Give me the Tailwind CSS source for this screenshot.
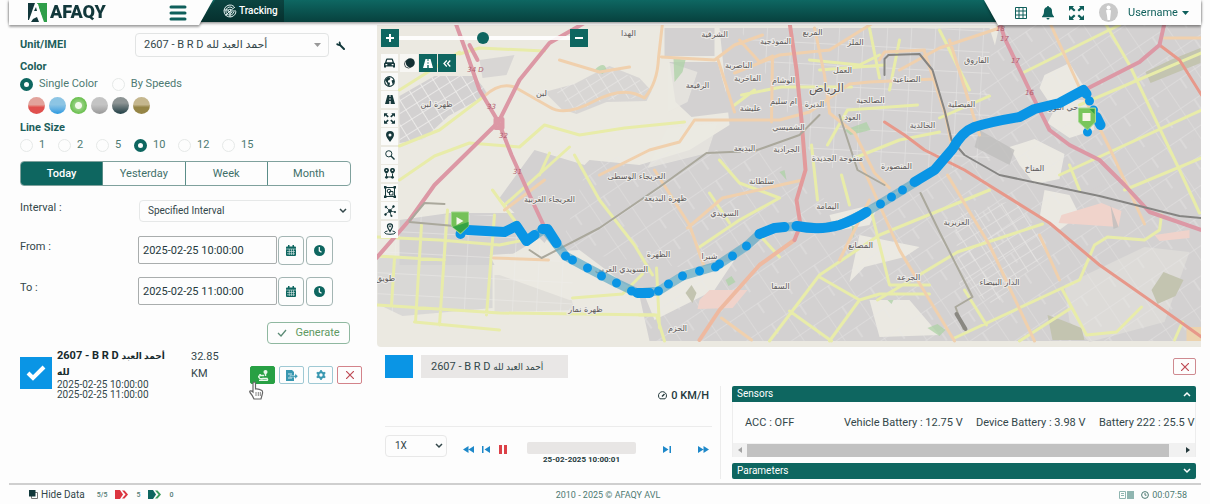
<!DOCTYPE html>
<html lang="en">
<head>
  <meta charset="UTF-8" />
  <meta name="viewport" content="width=device-width, initial-scale=1.0" />
  <title>AFAQY AVL - Tracking</title>
  <script src="https://cdn.jsdelivr.net/npm/@tailwindcss/browser@4"></script>
</head>
<body class="bg-[#fdfdfd] font-['Roboto','DejaVu_Sans',sans-serif] text-[11px] leading-4 text-[#33474a]">
<div class="min-h-screen flex flex-col px-[9px]">

  <!-- Header -->
  <header class="relative z-20 h-[22px] flex items-start bg-linear-to-b from-[#0e6762] to-[#07413e] shadow-[0_1px_3px_rgba(0,0,0,0.5)]">
    <div class="drop-shadow-[0_2px_1px_rgba(0,0,0,0.35)]">
      <div class="h-[25px] w-[204px] pl-[19px] pr-[26px] flex items-center justify-between bg-[#fdfdfd] [clip-path:polygon(0_0,100%_0,calc(100%-14px)_100%,0_100%)]">
        <a href="#" class="flex items-start h-6 gap-[2px] text-[#12383b] text-lg leading-[22px] font-black">
          <svg class="w-5 h-[21px]" viewBox="0 0 20 21"><path d="M0 2h7L1 19H0z" fill="#12383b"/><path d="M9 2h10v19h-3z" fill="#2f9e49"/><path d="M7 3l3 0 5 18h-3l-2-6-4 1-4 4H1L3 15l4-3z" fill="#fff"/><path d="M5 18l4-2 2 5H3z M6 10l2-4 1 4z" fill="#12383b"/></svg>
          AFAQY
        </a>
        <button aria-label="Menu"><svg class="w-[18px] h-4" viewBox="0 0 18 16" stroke="#0f5f5b" stroke-width="3" stroke-linecap="round"><path d="M2 2h14M2 8h14M2 14h14"/></svg></button>
      </div>
    </div>
    <a href="#" class="-ml-3 h-[22px] w-[83px] pl-[22px] flex items-center gap-[2px] text-white text-[10px] font-medium bg-linear-to-b from-[#0b4441] to-[#06302e] [clip-path:polygon(14px_0,100%_0,100%_100%,0_100%)]">
      <svg class="w-[14px] h-[14px] shrink-0" viewBox="0 0 14 14" fill="none" stroke="#e3f0ef"><path d="M13 7.500A6 6 0 1 1 11 2.500M10.800 8A4 4 0 1 1 9.500 4M9 8A2 2 0 1 1 8 5.500M7 7l5-4M7 7h6M2.500 11.500L7 7M7 7v6M1 6h5" stroke-width="1"/></svg>
      Tracking
    </a>
    <div class="ml-auto drop-shadow-[0_2px_1px_rgba(0,0,0,0.35)]">
      <div class="h-[25px] w-[217px] pl-[31px] pr-3 flex items-center justify-between text-[#0f5f5b] bg-[#fdfdfd] [clip-path:polygon(0_0,100%_0,100%_100%,14px_100%)]">
        <button aria-label="Tables"><svg class="w-3 h-3" viewBox="0 0 12 12" fill="none" stroke="currentColor"><path d="M.5.500h11v11H.5zM.5 4h11M.5 8h11M4 .5v11M8 .5v11"/></svg></button>
        <button aria-label="Alerts"><svg class="w-3 h-[14px]" viewBox="0 0 12 14" fill="currentColor"><path d="M6 0c.7 0 1 .5 1 1 2 .5 3 2 3 4 0 3 .7 4 2 5.500v.8H0v-.8C1.300 9 2 8 2 5c0-2 1-3.500 3-4 0-.5.3-1 1-1zM4.500 12h3a1.500 1.500 0 0 1-3 0z"/></svg></button>
        <button aria-label="Full screen"><svg class="w-[15px] h-[14px]" viewBox="0 0 15 14" fill="currentColor"><path d="M0 0h5L3.700 1.500 6.500 4 5 5.500 2 3 0 5zM15 0h-5l1.300 1.500L8.500 4 10 5.500 13 3l2 2zM0 14h5l-1.300-1.500L6.500 10 5 8.500 2 11 0 9zM15 14h-5l1.300-1.500L8.500 10 10 8.500 13 11l2-2z"/></svg></button>
        <button class="flex items-center gap-[10px] text-[11px]">
          <svg class="w-[19px] h-[19px]" viewBox="0 0 19 19"><circle cx="9.500" cy="9.500" r="9.500" fill="#c9c9c9"/><circle cx="9.500" cy="4.500" r="2" fill="#fff"/><path d="M7 7.500q2.500-2 5 0l-.5 5-.5 4.500H8.500L8 12.500z" fill="#fff"/></svg>
          <span class="flex items-center gap-1">Username <svg class="w-[7px] h-1" viewBox="0 0 7 4" fill="currentColor"><path d="M0 0h7L3.500 4z"/></svg></span>
        </button>
      </div>
    </div>
  </header>

  <main class="flex-1 flex pt-[3px]">

    <!-- Track form -->
    <aside class="w-[368px] shrink-0 pl-[11px] pt-2">
      <div class="flex items-center h-6">
        <label for="unit" class="w-[115px] font-bold text-[#1c5f5b]">Unit/IMEI</label>
        <div class="relative w-[194px]">
          <select id="unit" class="appearance-none w-full h-6 pl-2 border border-[#e2e4e4] rounded-sm bg-transparent">
            <option>2607 - B R D أحمد العبد لله</option>
          </select>
          <svg class="absolute right-2 top-[10px] w-[7px] h-1" viewBox="0 0 7 4" fill="#999"><path d="M0 0h7L3.500 4z"/></svg>
        </div>
        <button aria-label="Settings" class="ml-[7px]"><svg class="w-[9px] h-[9px]" viewBox="0 0 9 9" fill="none" stroke="#12383b"><path d="M3.500 3.500L8 8" stroke-width="2" stroke-linecap="round"/><path d="M1 2.500a1.600 1.600 0 0 0 2.500 1A1.600 1.600 0 0 0 3 1" stroke-width="1.800"/></svg></button>
      </div>

      <h2 class="mt-[2px] h-4 font-bold text-[#1c5f5b]">Color</h2>
      <div class="flex items-center h-[18px] text-[#4d7a72]">
        <input type="radio" name="mode" id="single" checked class="appearance-none w-[13px] h-[13px] rounded-full border border-[#e6e9e8] checked:border-4 checked:border-[#0e6660]">
        <label for="single" class="ml-[6px]">Single Color</label>
        <input type="radio" name="mode" id="speeds" class="appearance-none ml-[14px] w-[13px] h-[13px] rounded-full border border-[#e6e9e8] checked:border-4 checked:border-[#0e6660]">
        <label for="speeds" class="ml-[6px]">By Speeds</label>
      </div>
      <div class="flex gap-1 pl-2 pt-1 h-[27px]">
        <input type="radio" name="color" aria-label="Red" class="appearance-none w-[17px] h-[17px] rounded-full bg-linear-to-b from-[#e2a39c] from-45% to-[#e0504e] to-60%">
        <input type="radio" name="color" aria-label="Blue" class="appearance-none w-[17px] h-[17px] rounded-full bg-linear-to-b from-[#8dc5e4] from-45% to-[#2499e0]">
        <input type="radio" name="color" aria-label="Green" checked class="appearance-none w-[17px] h-[17px] rounded-full bg-[radial-gradient(circle,#f2fae9_3px,#93cf7e_4px,#62bd45_9px)]">
        <input type="radio" name="color" aria-label="Gray" class="appearance-none w-[17px] h-[17px] rounded-full bg-linear-to-b from-[#c4c4c4] from-45% to-[#989898]">
        <input type="radio" name="color" aria-label="Black" class="appearance-none w-[17px] h-[17px] rounded-full bg-linear-to-b from-[#8d9494] from-35% to-[#203f45]">
        <input type="radio" name="color" aria-label="Olive" class="appearance-none w-[17px] h-[17px] rounded-full bg-linear-to-b from-[#c5b78e] from-45% to-[#958546] to-60%">
      </div>

      <h2 class="h-4 font-bold text-[#1c5f5b]">Line Size</h2>
      <div class="flex items-center h-[18px] text-[#4d7a72] [&_input]:appearance-none [&_input]:w-[13px] [&_input]:h-[13px] [&_input]:rounded-full [&_input]:border [&_input]:border-[#e6e9e8] [&_input:checked]:border-4 [&_input:checked]:border-[#0e6660]">
        <input type="radio" name="size" id="s1"><label for="s1" class="ml-[6px] w-[19px]">1</label>
        <input type="radio" name="size" id="s2"><label for="s2" class="ml-[6px] w-[19px]">2</label>
        <input type="radio" name="size" id="s5"><label for="s5" class="ml-[6px] w-[19px]">5</label>
        <input type="radio" name="size" id="s10" checked><label for="s10" class="ml-[6px] w-[25px]">10</label>
        <input type="radio" name="size" id="s12"><label for="s12" class="ml-[6px] w-[25px]">12</label>
        <input type="radio" name="size" id="s15"><label for="s15" class="ml-[6px]">15</label>
      </div>

      <div class="mt-[7px] w-[331px] h-[25px] grid grid-cols-4 border border-[#7fa19d] rounded-sm overflow-hidden text-[#3f7069] divide-x divide-[#5a8d88]">
        <button class="bg-[#0e6660] text-white font-medium">Today</button>
        <button>Yesterday</button>
        <button>Week</button>
        <button>Month</button>
      </div>

      <div class="mt-[14px] w-[331px] flex">
        <label for="interval" class="w-[119px]">Interval :</label>
        <div class="relative flex-1">
          <select id="interval" class="appearance-none w-full h-[22px] pl-2 border border-[#e6e8e8] rounded-sm text-[10px]">
            <option>Specified Interval</option>
          </select>
          <svg class="absolute right-1 top-2 w-2 h-[6px]" viewBox="0 0 8 6" fill="none" stroke="#33474a" stroke-width="1.500"><path d="M1 1l3 3 3-3"/></svg>
        </div>
      </div>

      <div class="mt-[14px] flex gap-px">
        <label for="from" class="w-[117px] pt-[3px]">From :</label>
        <input id="from" type="text" value="2025-02-25 10:00:00" class="w-[139px] h-7 pl-1 border border-[#a9adad] rounded-xs text-[#24393c]">
        <button aria-label="Pick start date" class="w-[26px] h-[29px] flex items-center justify-center border border-[#a3b5b3] rounded-sm"><svg class="w-[10px] h-[11px]" viewBox="0 0 10 11"><path d="M1 1.500h8a1 1 0 0 1 1 1V10a1 1 0 0 1-1 1H1a1 1 0 0 1-1-1V2.500a1 1 0 0 1 1-1zM2 0h1.500v2H2zM6.500 0H8v2H6.500z" fill="#0e6660"/><path d="M0 4h10M1 6.500h8M1 8.800h8M3.300 4v6M5.500 4v6M7.500 4v6" stroke="#dcebe9" stroke-width=".6"/></svg></button>
        <button aria-label="Pick start time" class="ml-px w-[27px] h-[29px] flex items-center justify-center border border-[#a3b5b3] rounded-sm"><svg class="w-[11px] h-[11px]" viewBox="0 0 11 11"><circle cx="5.500" cy="5.500" r="5.500" fill="#0e6660"/><path d="M5.300 2v3.800l2.200 1.400" fill="none" stroke="#fff" stroke-width="1.200"/></svg></button>
      </div>

      <div class="mt-3 flex gap-px">
        <label for="to" class="w-[117px] pt-[3px]">To :</label>
        <input id="to" type="text" value="2025-02-25 11:00:00" class="w-[139px] h-7 pl-1 border border-[#a9adad] rounded-xs text-[#24393c]">
        <button aria-label="Pick end date" class="w-[26px] h-[29px] flex items-center justify-center border border-[#a3b5b3] rounded-sm"><svg class="w-[10px] h-[11px]" viewBox="0 0 10 11"><path d="M1 1.500h8a1 1 0 0 1 1 1V10a1 1 0 0 1-1 1H1a1 1 0 0 1-1-1V2.500a1 1 0 0 1 1-1zM2 0h1.500v2H2zM6.500 0H8v2H6.500z" fill="#0e6660"/><path d="M0 4h10M1 6.500h8M1 8.800h8M3.300 4v6M5.500 4v6M7.500 4v6" stroke="#dcebe9" stroke-width=".6"/></svg></button>
        <button aria-label="Pick end time" class="ml-px w-[27px] h-[29px] flex items-center justify-center border border-[#a3b5b3] rounded-sm"><svg class="w-[11px] h-[11px]" viewBox="0 0 11 11"><circle cx="5.500" cy="5.500" r="5.500" fill="#0e6660"/><path d="M5.300 2v3.800l2.200 1.400" fill="none" stroke="#fff" stroke-width="1.200"/></svg></button>
      </div>

      <div class="mt-4 w-[330px] flex justify-end">
        <button class="w-[83px] h-[22px] flex items-center justify-center gap-2 border border-[#8fb8a0] rounded-sm text-[#5f9a63]"><svg class="w-[10px] h-2" viewBox="0 0 10 8" fill="none" stroke="#5b8a75" stroke-width="1.300"><path d="M1 4l3 3 5-6"/></svg> Generate</button>
      </div>

      <!-- Generated track -->
      <div class="mt-1 flex">
        <input type="checkbox" checked aria-label="Show track" class="appearance-none mt-[9px] w-8 h-8 shrink-0 bg-[#0a95e5]">
        <svg class="relative pointer-events-none -ml-[26px] mt-[17px] w-5 h-4 shrink-0" viewBox="0 0 20 16" fill="none" stroke="#fff" stroke-width="4"><path d="M2 8l5 5L18 2"/></svg>
        <div class="ml-[11px] w-[134px]">
          <div class="w-[115px] font-bold leading-4 text-[#16292c]">2607 - B R D <span class="text-[9px]">أحمد العبد لله</span></div>
          <div class="text-[10px] leading-[10px]">2025-02-25 10:00:00<br>2025-02-25 11:00:00</div>
        </div>
        <div class="w-[59px] leading-[17px]">32.85<br>KM</div>
        <div class="flex gap-1 pt-[18px] [&>button]:w-[25px] [&>button]:h-[18px] [&>button]:flex [&>button]:items-center [&>button]:justify-center [&>button]:border [&>button]:rounded-xs">
          <button aria-label="Play route" class="relative bg-[#28a044] border-[#28a044]">
            <svg class="w-3 h-3" viewBox="0 0 12 12" fill="none" stroke="#e8f7ea" stroke-width="1.500"><circle cx="8.500" cy="3" r="1.300" fill="#e8f7ea"/><path d="M8.500 4v3M7 6.500H4q-3 0-2 2t4 1h4q1.500 2-1 2H2M3 5v2"/></svg>
            <svg class="absolute -left-[3px] top-[14px] w-4 h-5" viewBox="0 0 16 20" fill="#fff" stroke="#666" stroke-width="1.200"><path d="M5 11V2.500q0-1.500 1.200-1.500T7.500 2.500V8q3-.5 6.500 1.500.8 1 .5 3L13 18H6q-1-3-4-6.500-.8-1.500.5-1.700T5 11z"/><path d="M8 11v4M10.300 11v4M12.300 11v4" stroke-width=".8"/></svg>
          </button>
          <button aria-label="Export" class="border-[#9fc9d4]"><svg class="w-3 h-[11px]" viewBox="0 0 12 11"><path d="M0 0h6l2 2v9H0z" fill="#3897b0"/><path d="M2 4h4M2 8h4" stroke="#fff" stroke-width=".8"/><path d="M4 5.500h5V3.500l3 2.700-3 2.800V7.200H4z" fill="#3897b0" stroke="#fff" stroke-width=".4"/></svg></button>
          <button aria-label="Options" class="border-[#9fc9d4]"><svg class="w-[10px] h-[10px]" viewBox="0 0 10 10" fill="none" stroke="#3897b0"><circle cx="5" cy="5" r="2.700" stroke-width="2"/><path d="M5 0v10M.7 2.500l8.600 5M.7 7.500l8.600-5" stroke-width="1.600" stroke-dasharray="2 6 2"/></svg></button>
          <button aria-label="Remove" class="border-[#d3838a]"><svg class="w-2 h-2" viewBox="0 0 8 8" stroke="#bf4b55" stroke-width="1.200"><path d="M0 0l8 8M8 0L0 8"/></svg></button>
        </div>
      </div>
    </aside>

    <div class="flex-1 min-w-0 flex flex-col">

      <!-- Map -->
      <section class="relative flex-1 min-h-[280px] rounded-bl-sm overflow-hidden bg-[#ebe9e1]">
        <svg class="absolute inset-0 w-full h-full font-['DejaVu_Sans',sans-serif]" viewBox="377 25 825 322" preserveAspectRatio="xMidYMid slice">
          <defs>
            <pattern id="streetsA" width="13" height="11" patternUnits="userSpaceOnUse" patternTransform="rotate(-32)"><path d="M0 0H13M0 0V11" stroke="#f1f0ee" stroke-width="1.600" fill="none"/></pattern>
            <pattern id="streetsB" width="34" height="25" patternUnits="userSpaceOnUse" patternTransform="rotate(-34)"><path d="M0 0H34M0 0V25M17 0V12" stroke="#e9e8e7" stroke-width="1.300" fill="none"/></pattern>
            <pattern id="streetsC" width="24" height="21" patternUnits="userSpaceOnUse" patternTransform="rotate(3)"><path d="M0 0H24M0 0V21" stroke="#efeeec" stroke-width="1.300" fill="none"/></pattern>
          </defs>

          <!-- Built-up areas -->
          <g fill="#d3d1d1">
            <path d="M400 96l35-20 40 0 14 18-40 22-25 23-24 4z"/>
            <path d="M480 60l35-5-8 20-24 3zM545 92l30-8 15-8 20-10 30 12 12 13-5 10-40 1-30 12-15-5z" opacity=".8"/>
            <path d="M665 28h50v28h-50zM670 62l48 0 14 50-40 5-16-15zM720 28H990L1000 60 1040 130 960 150 900 190 840 225 800 226 740 250 700 270 640 292 600 270 560 250 545 225 560 190 590 160 640 165 690 150 730 125z"/>
            <path d="M535 150l60 18-50 75-45-45z M450 213h85l10 22-50 30h-95v-45z"/>
            <path d="M378 258h115v50l-90 8-25-12z" opacity=".75"/>
            <path d="M495 275h70l10 35-80 2z" opacity=".45"/>
            <path d="M640 296L760 235 800 230 870 215 960 145 1202 95V341H650z"/>
            <path d="M1000 25h202v110l-120 60-120-40 20-50z"/>
          </g>
          <g fill="#ebe9e2">
            <path d="M1020 165l-10-18 25-8 30 15-5 25-25 5zM1045 75l25-12 15 25-35 15-10-15zM1060 100l30 0 5 30-25 8-22-15zM1045 190l25 5 10 20-20 15-20-12z"/>
            <path d="M860 235l60 12-15 10-40 10-15 15zM870 300h40l30 35-60 2zM830 215l50-12-10 22-35 6z"/>
            <path d="M1065 285l80-38 45 5-25 70-75 20-20-20z" fill="#dddbd8"/>
            <path d="M490 255l90-5 40 30 10 20-60 0-70-25zM655 320l60-30 20-30-50 10-40 25z"/>
            <path d="M668 62l30 10-10 30-20 10z M648 168l20-40 50-5-10 30z" opacity=".7"/>
          </g>
          <path d="M400 96l35-20 40 0 14 18-40 22-25 23-24 4z" fill="url(#streetsA)"/>
          <path d="M555 90l35-12 20-10 30 12 10 10-5 8-40 2-30 12zM955 215l60-15 35 50-55 55-35-20z" fill="url(#streetsA)" opacity=".6"/>
          <path d="M640 296L760 235 870 215 960 145 1202 95V341H650zM1000 25h202v110l-120 60-120-40zM560 250l30-90 90-10 80 0 80 60-140 60z" fill="url(#streetsB)" opacity=".55"/>
          <path d="M378 215h115l80 50v48H378zM740 28h250v140H820z" fill="url(#streetsC)" opacity=".6"/>
          <g fill="#f0d3cb"><path d="M700 300l10-10 38 0-15 18-35 1zM1062 215l40-12 20 8-3 16-60-4zM1155 235l35-5v8l-30 3z"/></g>
          <g fill="#aed2a6" opacity=".75"><path d="M674 58l12 2-3 12-8 10zM845 130l22-8 4 8-20 5zM726 280l6-4 4 6-7 4zM928 328l10-4 8 6-6 6zM595 70q10-10 12 0l-4 4zM780 172l5-2 2 10zM852 226h4l-2 12zM888 300h6l-2 4z"/></g>
          <g fill="#c3c4b0"><path d="M1152 290l12-18 20 8-8 16-18 8zM1048 315l14 5 20 8 3 12-32 0zM1146 72l25-12 30-12v15l-50 20zM686 293l6-8 5 8-4 10z"/></g>
          <path d="M1187 327h15v14h-15z" fill="#ecd3ae"/>
          <path d="M980 130l35 20-5 15-35-18zM1111 205l8 22-5 2z" fill="#bfbebd" opacity=".8"/>

          <g fill="none" stroke-linejoin="round" stroke-linecap="round">
            <!-- Secondary roads -->
            <g stroke="#e8eca9" stroke-width="3">
              <path d="M460 54l20-6 65 3M400 90l60-38M400 146l40-16 45-34M400 180l35-24 35-13 50 4 25-22 35 10 45-7 60-6M378 237l62 3 60 5 25-5M378 256l67 4M422 225l-6 97M448 210l-8 115M495 215l-8 100M378 305l122 8 155 2M395 258l-3 47M415 322l85 8M493 190l34 47M505 205l45-40 20-18M540 175l10-22M575 155l25 45 35 45 18 30M573 298l50-4 20-20"/>
              <path d="M700 247l40-27 40-22-40-15-20-23M710 193l20 30M742 95l40-8 70 0M735 105l20-15M810 60l50 5 20-10M828 145l20-35 70-5M820 70l65-5M870 28l10 50M812 145l6 55M842 175l8 30M660 328l-3-60M640 315h17l8 26M760 235l20 22"/>
              <path d="M770 341l50-66 60-40 110-45M820 277l40 23-30 41M860 300l20-6h50M872 212l18 73h40M790 311l42 30M878 300l80-48 85-28M955 338l125-58 15-35 13-8 37 3 15-10 2-15M1063 290l24 45 30-3 25-25M1060 175l142-65M1025 72l95-47M1105 22l25 43 50 105 20 43M1080 105l122-52M1070 165l10 25M1125 190l77-32M1020 341l50-32M940 30l30 60M940 118l50-22M965 290l22 35M1175 340l8-18M900 40l-10 50M850 160l50-20 40-8"/>
            </g>
            <g stroke="#f0d0ad" stroke-width="3">
              <path d="M485 96q15-14 30-9l35 20q15 10 45-6t50-3q13-15 14-40l4-35M600 175l50-25 30-8 15-22h85l30-8 40-28 20-2 65-3M662 57l53 3 20-15 28-10M718 58l17 54M773 56l-1 66M735 73l45-18 50-5 45-28M740 40l20 22 13-6M815 28l10 47 5 37M880 60l5-8 40-2M655 170l35 55 14 40M688 228l35-30 80-18M545 180l-40 30M494 258l55 2M860 160l40 90 30 50 25 41M1050 22l32 70 30 60 33 72M1040 235l20 45M945 110l8 40M948 175l42 70 45 96M950 40l30 95M722 318l30 22M830 113l25 20 20 40 15 15M925 52l20 60M560 60l40 12 30-5M870 200l-30 60M900 70l40-22 60-20M1165 38h37"/>
            </g>
            <!-- Trunk roads -->
            <path d="M795 240l-35 25-40 45-20 30" stroke="#eeb9a0" stroke-width="4"/>
            <path d="M885 122l20 13 20 15 40 20 85 53 50 42 50 35 52 37M1160 45l20 15 22 35" stroke="#e7988a" stroke-width="3"/>
            <path d="M790 22l7 48 5 50 4 50-9 30 4 25-6 15" stroke="#e29a9b" stroke-width="4"/>
            <!-- Motorways -->
            <g stroke="#dc98a5" stroke-width="4">
              <path d="M455 20l11 30 14 40 19 32 13 33 18 40 14 30M590 20l-40 23-30 37-21 42-64 63-25 35-33 38M1000 22l5 16 25 52 20 40 20 15 30 15 25 25 25 27 52 18M1085 90l55-28 20-17 5-22"/>
              <path d="M470 45l8 15M496 119h7v9h-7z" stroke-width="4"/>
            </g>
            <!-- Railways -->
            <path d="M410 221l15-18 20 1M410 222l90 8M530 250l12 8 58-30 60-41 47-34 48-2 45-16 20-20M840 115l18 55 27 15M921 193l19 39 33 65-17 10 8 22" stroke="#aaa89c" stroke-width="2"/>
            <path d="M885 75v-16l4-4 31-1 13 16 12 40 7 30 13 15 35 20 100 21 80 20 22 2" stroke="#858482" stroke-width="2"/>
            <path d="M957 314l9 15" stroke="#8a8882" stroke-width="4"/>
          </g>

          <!-- Place names -->
          <g fill="#5b5858" stroke="#edebe8" stroke-width="2" paint-order="stroke" font-size="8" text-anchor="middle" direction="rtl">
            <text x="629" y="36">الهدا</text><text x="542" y="96">لبن</text><text x="437" y="107">ظهرة لبن</text>
            <text x="715" y="37">الشرفية</text><text x="776" y="44">النموذجية</text><text x="813" y="35">المربع</text>
            <text x="856" y="45">الملز</text><text x="739" y="68">الناصرية</text><text x="843" y="73">العمل</text>
            <text x="748" y="81">الفاخرية</text><text x="698" y="88">الرفيعة</text><text x="784" y="83">الوشام</text>
            <text x="827" y="92" font-size="12">الرياض</text><text x="907" y="82">الصناعية</text><text x="784" y="104">ام سليم</text>
            <text x="815" y="107">الديرة</text><text x="871" y="103">الصالحية</text><text x="751" y="111">عليشة</text>
            <text x="853" y="120">العود</text><text x="789" y="130">الشميسي</text><text x="787" y="152">الجرادية</text>
            <text x="745" y="151">البديعة</text><text x="838" y="161">منفوحة الجديدة</text><text x="923" y="128">الخالدية</text>
            <text x="897" y="169">المنصورة</text><text x="762" y="184">سلطانة</text><text x="977" y="63">الفاروق</text>
            <text x="962" y="107">الفيصلية</text><text x="1064" y="110">حي النور</text><text x="1035" y="171">المناخ</text>
            <text x="637" y="179">العريجاء الوسطى</text><text x="550" y="202">العريجاء الغربية</text><text x="666" y="201">ظهرة البديعة</text>
            <text x="622" y="272">السويدي الغربي</text><text x="386" y="281">طويق</text><text x="586" y="312">ظهرة نمار</text>
            <text x="725" y="216">السويدي</text><text x="659" y="257">الظهرة</text><text x="710" y="259">شبرا</text>
            <text x="781" y="289">السفا</text><text x="678" y="331">الحزم</text><text x="828" y="209">اليمامة</text>
            <text x="861" y="248">المصانع</text><text x="909" y="280">الجرعة</text><text x="957" y="225">العزيزية</text>
            <text x="1000" y="285">الدار البيضاء</text>
          </g>
          <g fill="#b0606f" font-size="7" font-style="italic" text-anchor="middle">
            <text x="476" y="72">34 D</text><text x="492" y="109">33</text><text x="504" y="138">32</text><text x="518" y="174">31</text>
            <text x="1001" y="31">18</text><text x="1005" y="41">17</text><text x="1016" y="63">17</text><text x="1030" y="95">16</text>
          </g>

          <!-- Travelled route -->
          <g fill="none" stroke="#0a95e5" stroke-linejoin="round" stroke-linecap="round">
            <path d="M527 241L545 229 556 243 566 256 588 268 617 283 638 293 659 291 683 276 717 266 747 246 760 234 775 228 800 226 820 228 840 225 867 212 892 197 918 181" stroke="#5fa9c6" stroke-opacity=".7" stroke-width="9"/>
            <path d="M461 234v0M468 230L505 232 517 226 527 241 535 235M543 229L548 229 557 243M638 293h12M760 234L775 228 785 227M797 226Q820 231 840 225 855 220 867 212M915 182L935 170 953 149Q962 132 975 127 990 122 1020 117L1035 109 1060 103 1084 90 1087 94M1101 125L1097 117" stroke-width="10"/>
            <path d="M566 256v0M573 260v0M588 268v0M602 276v0M617 283v0M632 291v0M659 291v0M669 284v0M683 276v0M700 271v0M716 267v0M720 264v0M733 256v0M747 246v0M881 204v0M892 197v0M903 190v0M1090 101v0M1094 110v0M1088 132v0" stroke-width="9"/>
          </g>
          <!-- Start and end markers -->
          <path d="M452 212h17v14l-8 8-9-8z" fill="#74c158" stroke="#9fd58c"/>
          <path d="M453 227l16-5v4l-8 7z" fill="#35a344"/><path d="M457 217v8l7-4z" fill="#f4f8ea"/>
          <path d="M1079 108h17v14l-8 8-9-8z" fill="#79c65b" stroke="#a6d895"/>
          <path d="M1090 109h5v5z" fill="#35a344"/><path d="M1083 113h8v8h-8z" fill="#f6f4e6"/>
        </svg>

        <!-- Zoom -->
        <div class="absolute left-1 top-1 flex items-center">
          <button aria-label="Zoom in" class="w-[18px] h-[18px] bg-[#0e6660] flex items-center justify-center"><svg class="w-2 h-2" viewBox="0 0 8 8" stroke="#fff" stroke-width="2"><path d="M0 4h8M4 0v8"/></svg></button>
          <input type="range" aria-label="Zoom level" value="49" class="appearance-none w-[171px] h-1 bg-white/90 [&::-webkit-slider-thumb]:appearance-none [&::-webkit-slider-thumb]:w-3 [&::-webkit-slider-thumb]:h-3 [&::-webkit-slider-thumb]:rounded-full [&::-webkit-slider-thumb]:bg-[#0e6660]">
          <button aria-label="Zoom out" class="w-[18px] h-[18px] bg-[#0e6660] flex items-center justify-center"><svg class="w-2 h-2" viewBox="0 0 8 8" stroke="#fff" stroke-width="2"><path d="M0 4h8"/></svg></button>
        </div>

        <!-- Map tools -->
        <div class="absolute left-1 top-[29px] h-[184px] flex flex-col justify-between text-[#16383b] [&>button]:w-[17px] [&>button]:h-[17px] [&>button]:flex [&>button]:items-center [&>button]:justify-center [&>button]:bg-[#fafaf9]">
          <button aria-label="Vehicles"><svg class="w-[11px] h-[10px]" viewBox="0 0 11 10" fill="currentColor"><path d="M2 1.500Q2.200.500 3 .5h5q.8 0 1 1l1 3 1 1V9.500H9V8.500H2v1H0V5.500l1-1zM3.200 1.800L2.500 4.200h6L7.800 1.800zM1.500 6v1.200h1.800V6zM7.700 6v1.200h1.800V6z" fill-rule="evenodd"/></svg></button>
          <button aria-label="Base map"><svg class="w-[11px] h-[11px]" viewBox="0 0 11 11"><circle cx="5.500" cy="5.500" r="4.800" fill="#fff" stroke="currentColor" stroke-width="1.200"/><path d="M1 4l3-3 2.500.8L5.500 4 4 4.500v1.700l2 .6-.5 3L4 10 3 7zM7.500 4.500L10 3.500v3L8.500 8z" fill="currentColor"/></svg></button>
          <button aria-label="Traffic"><svg class="w-[10px] h-[9px]" viewBox="0 0 10 9"><path d="M2.500 0H4.500v2h1V0h2L10 9H5.700V6H4.300v3H0zM4.500 3.200v1.500h1V3.200z" fill="currentColor" fill-rule="evenodd"/></svg></button>
          <button aria-label="Fit"><svg class="w-[11px] h-[11px]" viewBox="0 0 15 14" fill="currentColor"><path d="M0 0h5L3.700 1.500 6.500 4 5 5.500 2 3 0 5zM15 0h-5l1.300 1.500L8.500 4 10 5.500 13 3l2 2zM0 14h5l-1.300-1.500L6.500 10 5 8.500 2 11 0 9zM15 14h-5l1.300-1.500L8.500 10 10 8.500 13 11l2-2z"/></svg></button>
          <button aria-label="Places"><svg class="w-2 h-[11px]" viewBox="0 0 8 11"><path d="M4 0a4 4 0 0 1 4 4c0 2.500-3 5-4 7C3 9 0 6.500 0 4a4 4 0 0 1 4-4zm0 2.500A1.500 1.500 0 1 0 4 5.500 1.500 1.500 0 0 0 4 2.500z" fill="currentColor" fill-rule="evenodd"/></svg></button>
          <button aria-label="Search"><svg class="w-[10px] h-[10px]" viewBox="0 0 10 10" fill="none" stroke="currentColor"><circle cx="3.800" cy="3.800" r="3.100"/><path d="M6 6l3.500 3.500" stroke-width="1.400"/></svg></button>
          <button aria-label="Route"><svg class="w-[11px] h-[11px]" viewBox="0 0 11 11"><path d="M2.500 0A2.300 2.300 0 0 1 5 2.300C5 4 2.500 6 2.500 6S0 4 0 2.300A2.300 2.300 0 0 1 2.500 0zM8.500 0A2.300 2.300 0 0 1 11 2.300C11 4 8.500 6 8.500 6S6 4 6 2.300A2.300 2.300 0 0 1 8.500 0z" fill="currentColor"/><circle cx="2.500" cy="2.300" r=".8" fill="#fff"/><circle cx="8.500" cy="2.300" r=".8" fill="#fff"/><path d="M2.500 6v3h6V6" fill="none" stroke="currentColor"/><circle cx="2.500" cy="9.300" r="1.400" fill="currentColor"/><circle cx="8.500" cy="9.300" r="1.400" fill="currentColor"/></svg></button>
          <button aria-label="Geofence"><svg class="w-3 h-3" viewBox="0 0 12 12" fill="none" stroke="currentColor"><path d="M1.500 1.500h9v9h-9z"/><path d="M0 0h2.500v2.500H0zM9.500 0H12v2.500H9.500zM0 9.500h2.500V12H0zM9.500 9.500H12V12H9.500z" fill="currentColor" stroke="none"/><circle cx="5" cy="5" r="1.800"/><path d="M5.500 5.500H9V9H5.500z"/></svg></button>
          <button aria-label="Cluster"><svg class="w-3 h-3" viewBox="0 0 12 12" fill="currentColor" stroke="currentColor" stroke-width=".8"><path d="M6 6L2 2M6 6l3.500-4.500M6 6l5 1M6 6l-4.500 3M6 6l1 5"/><circle cx="6" cy="6" r="1.500"/><circle cx="2" cy="2" r=".9"/><circle cx="9.500" cy="1.500" r=".9"/><circle cx="11" cy="7" r=".7"/><circle cx="1.500" cy="9.500" r=".9"/><circle cx="7.500" cy="11" r=".7"/></svg></button>
          <button aria-label="My position"><svg class="w-3 h-3" viewBox="0 0 12 12" fill="none" stroke="currentColor"><path d="M6 8.500C5 7 3.500 5 3.500 3.300a2.500 2.500 0 0 1 5 0C8.500 5 7 7 6 8.500z" stroke-width="1.300"/><circle cx="6" cy="3.300" r=".6"/><path d="M3.500 8Q.5 8.500.6 9.700 1 11.300 6 11.300t5.400-1.600Q11.500 8.500 8.500 8"/></svg></button>
        </div>
        <div class="absolute left-[23px] top-[29px] flex gap-px [&>button]:h-[18px] [&>button]:w-[18px] [&>button]:flex [&>button]:items-center [&>button]:justify-center">
          <button aria-label="Shade" class="bg-white/60"><svg class="w-[11px] h-[11px]" viewBox="0 0 11 11"><circle cx="4.500" cy="6" r="4" fill="#fff" stroke="#16292c" stroke-width=".8"/><circle cx="6.300" cy="4.800" r="4.500" fill="#122f33"/></svg></button>
          <button aria-label="Roads" class="bg-[#0e6660] text-white"><svg class="w-[10px] h-[9px]" viewBox="0 0 10 9"><path d="M2.500 0H4.500v2h1V0h2L10 9H5.700V6H4.300v3H0zM4.500 3.200v1.500h1V3.200z" fill="currentColor" fill-rule="evenodd"/></svg></button>
          <button aria-label="Collapse" class="bg-[#0e6660]"><svg class="w-2 h-[7px]" viewBox="0 0 8 7" fill="none" stroke="#fff" stroke-width="1.300"><path d="M3.800.500L1 3.500l2.800 3M7.300.500L4.500 3.500l2.800 3"/></svg></button>
        </div>
      </section>

      <!-- Player -->
      <section class="pt-2 pb-1 pl-2 pr-[5px]">
        <div class="flex items-center">
          <span class="w-7 h-[23px] bg-[#0a95e5]"></span>
          <span class="ml-2 w-[147px] h-[23px] pl-[10px] leading-[23px] bg-[#e9e7e6]">2607 - B R D <span class="text-[9px]">أحمد العبد لله</span></span>
          <button aria-label="Close" class="ml-auto w-[23px] h-[17px] flex items-center justify-center border border-[#cf8a90] rounded-xs"><svg class="w-2 h-2" viewBox="0 0 8 8" stroke="#bf4b55" stroke-width="1.200"><path d="M0 0l8 8M8 0L0 8"/></svg></button>
        </div>
        <div class="mt-2 flex">
          <div class="w-[336px] pr-2 border-r border-[#ececec]">
            <div class="h-[41px] pt-[2px] pr-[3px] flex items-start justify-end gap-1 font-medium text-[#24393c] border-b border-[#ececec]">
              <svg class="mt-[3px] w-[9px] h-[9px]" viewBox="0 0 9 9" fill="none" stroke="currentColor"><path d="M2 7.800a4 4 0 1 1 5 0z"/><path d="M4 5.500L6.500 3" stroke-width="1.500"/></svg>
              0 KM/H
            </div>
            <div class="pt-2 flex items-start">
              <div class="relative">
                <select aria-label="Speed" class="appearance-none w-[62px] h-[22px] pl-[9px] border border-[#e8e8e8] rounded-sm text-[10px]"><option>1X</option></select>
                <svg class="absolute right-1 top-2 w-2 h-[6px]" viewBox="0 0 8 6" fill="none" stroke="#33474a" stroke-width="1.500"><path d="M1 1l3 3 3-3"/></svg>
              </div>
              <button aria-label="Rewind" class="ml-4 mt-[11px]"><svg class="w-[11px] h-[7px]" viewBox="0 0 11 7" fill="#1e88c9"><path d="M5.500 0v7L0 3.500zM11 0v7L5.500 3.500z"/></svg></button>
              <button aria-label="Previous" class="ml-2 mt-[11px]"><svg class="w-2 h-[7px]" viewBox="0 0 8 7" fill="#1e88c9"><path d="M0 0h1.500v7H0zM8 0v7L2.500 3.500z"/></svg></button>
              <button aria-label="Pause" class="ml-[9px] mt-[10px]"><svg class="w-2 h-[9px]" viewBox="0 0 8 9" fill="#dc4148"><path d="M0 0h3v9H0zM5 0h3v9H5z"/></svg></button>
              <div class="ml-5 w-[109px] pt-[7px]">
                <div class="h-3 bg-[#e8e6e5] rounded-xs"></div>
                <div class="text-[8px] leading-3 font-bold text-center text-[#24393c]">25-02-2025 10:00:01</div>
              </div>
              <button aria-label="Next" class="ml-[27px] mt-[11px]"><svg class="w-2 h-[7px]" viewBox="0 0 8 7" fill="#1e88c9"><path d="M6.500 0H8v7H6.500zM0 0v7l5.500-3.500z"/></svg></button>
              <button aria-label="Forward" class="ml-auto mr-[3px] mt-[11px]"><svg class="w-[11px] h-[7px]" viewBox="0 0 11 7" fill="#1e88c9"><path d="M0 0v7l5.500-3.500zM5.500 0v7L11 3.500z"/></svg></button>
            </div>
          </div>

          <div class="ml-[11px] flex-1 min-w-0">
            <button class="w-full h-4 px-[5px] flex items-center justify-between bg-[#0e6660] text-white text-[10px] rounded-t-xs">Sensors <svg class="w-2 h-[6px]" viewBox="0 0 8 6" fill="none" stroke="#fff" stroke-width="1.500"><path d="M1 5l3-3 3 3"/></svg></button>
            <div class="border-x border-[#ededed]">
              <div class="h-[41px] pl-3 flex items-center overflow-hidden whitespace-nowrap">
                <span class="w-[99px] shrink-0">ACC : OFF</span>
                <span class="w-[132px] shrink-0">Vehicle Battery : 12.75 V</span>
                <span class="w-[123px] shrink-0">Device Battery : 3.98 V</span>
                <span>Battery 222 : 25.5 V</span>
              </div>
              <div class="h-[14px] px-1 flex items-center bg-[#f1f1f1]">
                <svg class="w-[10px] h-[6px]" viewBox="0 0 10 6" fill="#a3a3a3"><path d="M5 0v6L1 3z"/></svg>
                <div class="flex-1 h-[13px] bg-[#c1c1c1]"></div>
                <svg class="ml-4 w-[6px] h-[6px]" viewBox="0 0 6 6" fill="#24393c"><path d="M1 0v6l4-3z"/></svg>
              </div>
            </div>
            <button class="mt-[6px] w-full h-4 px-[5px] flex items-center justify-between bg-[#0e6660] text-white text-[10px] rounded-xs">Parameters <svg class="w-2 h-[6px]" viewBox="0 0 8 6" fill="none" stroke="#fff" stroke-width="1.500"><path d="M1 1l3 3 3-3"/></svg></button>
          </div>
        </div>
      </section>
    </div>
  </main>

  <!-- Footer -->
  <footer class="h-[21px] pl-5 pr-[14px] grid grid-cols-[1fr_auto_1fr] items-center border-t-2 border-[#cfcfcf] text-[9px] text-[#4d7a72]">
    <div class="flex items-center text-[7px] font-medium">
      <button class="flex items-center gap-[3px] text-[10px] font-normal text-[#33474a]"><svg class="w-[9px] h-[9px]" viewBox="0 0 9 9"><path d="M2.500 2.500h6v6h-6z" fill="#fff" stroke="#777"/><path d="M0 0h6.500v6.500H0z" fill="#12383b"/></svg>Hide Data</button>
      <span class="ml-3">5/5</span>
      <svg class="ml-2 w-[13px] h-[9px]" viewBox="0 0 13 9"><path d="M0 0h5l3 4.500L5 9H0z" fill="#dc3540"/><path d="M7 .5l3.500 4L7 8.500h2.500l3.500-4-3.500-4z" fill="#dc3540"/></svg>
      <span class="ml-2">5</span>
      <svg class="ml-2 w-[13px] h-[9px]" viewBox="0 0 13 9"><path d="M0 0h5l3 4.500L5 9H0z" fill="#0e6660"/><path d="M7 .5l3.500 4L7 8.500h2.500l3.500-4-3.500-4z" fill="#3c9a5c"/></svg>
      <span class="ml-2">0</span>
    </div>
    <p>2010 - 2025 © AFAQY AVL</p>
    <div class="flex items-center justify-end gap-[3px]">
      <svg class="mr-1 w-[15px] h-2" viewBox="0 0 15 8" fill="#8fb5b0"><path d="M8 0h7v8H8z"/><path d="M.5.500h6v7h-6zM2 2.500h3M2 4.500h3" fill="none" stroke="#8fb5b0"/></svg>
      <svg class="w-2 h-2" viewBox="0 0 8 8" fill="none" stroke="#4d7a72"><circle cx="4" cy="4" r="3.400"/><path d="M4 2v2.200h1.500"/></svg>
      <span>00:07:58</span>
    </div>
  </footer>

</div>
</body>
</html>
